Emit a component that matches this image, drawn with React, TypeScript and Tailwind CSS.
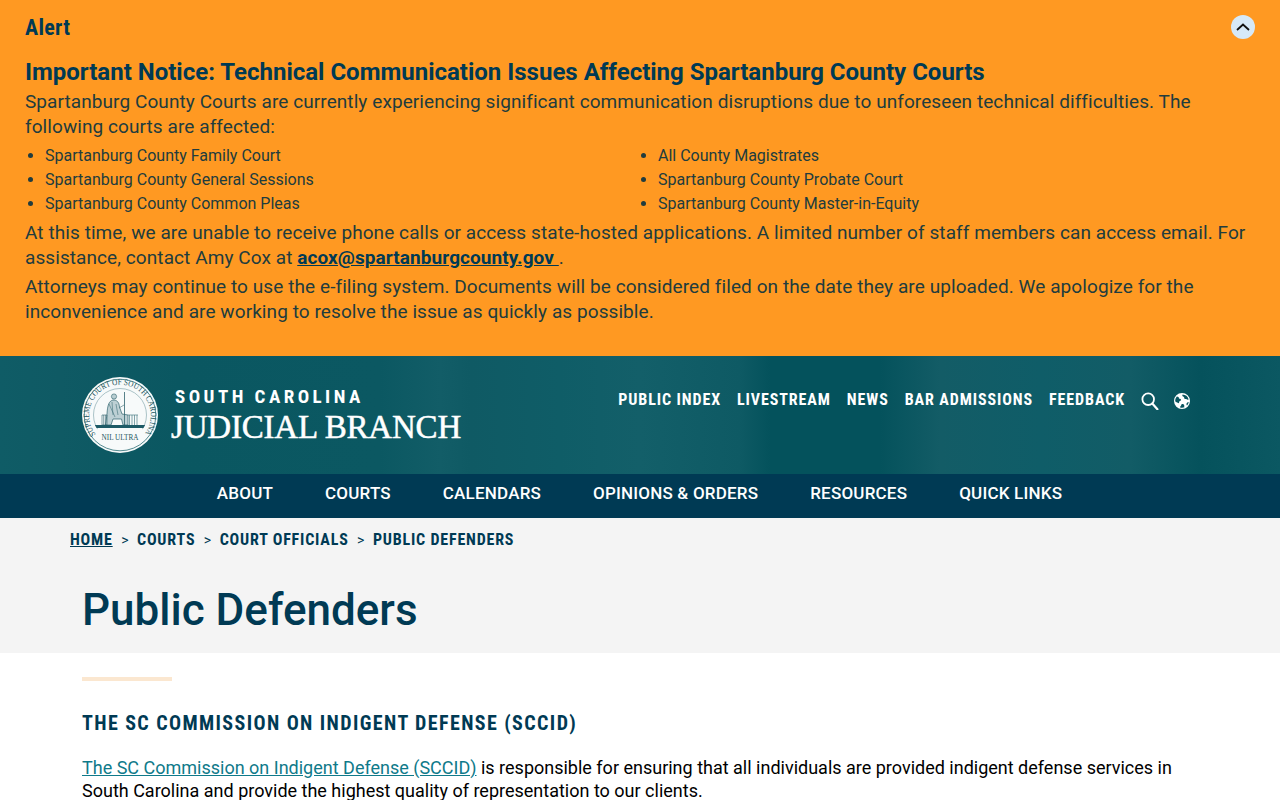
import React from "react";

function Seal() {
  return (
    <svg viewBox="0 0 76 76" className="w-[76px] h-[76px] shrink-0">
      <circle cx="38" cy="38" r="38" fill="#f7fafa" />
      <circle cx="38" cy="38" r="35.800" fill="none" stroke="#0f5a63" strokeWidth="0.7" />
      <defs>
        <path id="sealArc" d="M 13.800 57.500 A 30.800 30.800 0 1 1 62.500 57" />
        <clipPath id="sealInner"><circle cx="38" cy="38" r="27" /></clipPath>
      </defs>
      <text fontFamily="'Liberation Serif', serif" fontSize="8.500" fill="#1d5560">
        <textPath href="#sealArc" textLength="136" lengthAdjust="spacingAndGlyphs">SUPREME COURT OF SOUTH CAROLINA</textPath>
      </text>
      <circle cx="38" cy="38" r="26.500" fill="none" stroke="#5d8a92" strokeWidth="0.5" />
      <g clipPath="url(#sealInner)">
        <circle cx="32" cy="19.500" r="2.600" fill="#b9ced2" stroke="#2f636d" strokeWidth="0.6" />
        <path d="M25 37 C25.500 28 27 24 31 23 C35 23 37 25 37.500 30 L40 37 L46 38 V48 H41 L39.500 42 H31 L29 48 H23.500 Z" fill="#bdd0d4" stroke="#2f636d" strokeWidth="0.7" />
        <path d="M27 27 L33 40 M30 25 L31 38 M34 27 L36 38 M37 31 L42 28" fill="none" stroke="#3f7079" strokeWidth="0.6" />
        <path d="M42.500 15 V48" stroke="#2f636d" strokeWidth="0.8" />
        <path d="M46 38 H56 M47.500 38 V48 M50 38 V48 M52.500 38 V48 M55 38 V48" fill="none" stroke="#4e7f88" strokeWidth="0.7" />
        <path d="M20 38 h5 v10 h-5 z M21.700 38 v10 M23.400 38 v10" fill="none" stroke="#2f636d" strokeWidth="0.6" />
        <path d="M11 48 H65 V51 H11 Z" fill="#1d5a66" />
      </g>
      <path d="M15 52 H61 C59 58 54 62.500 49 65 H27 C22 62.500 17 58 15 52 Z" fill="#f7fafa" />
      <text x="38" y="62.500" textAnchor="middle" fontFamily="'Liberation Serif', serif" fontSize="7.200" fill="#1d5560">NIL ULTRA</text>
    </svg>
  );
}

function MagnifyIcon() {
  return (
    <svg viewBox="0 0 18 18" className="w-[18px] h-[18px] mt-[1px] mr-[-1px]" fill="none" stroke="#fff">
      <circle cx="7.200" cy="7.200" r="5.800" strokeWidth="1.800" />
      <path d="M11.300 11.600 L16.400 17.200" strokeWidth="2.200" strokeLinecap="round" />
    </svg>
  );
}

function Globe() {
  return (
    <svg viewBox="0 0 16 16" className="w-4 h-4 mt-[1px]" fill="#fff">
      <path fillRule="evenodd" d="M8 0a8 8 0 1 0 0 16A8 8 0 0 0 8 0ZM2.900 3.600c.7.2 1.200.1 1.600.5.4.5.1 1 .6 1.400.6.5 1.400.3 1.800.9.3.5 0 1-.4 1.400-.4.3-.9.3-1.200.7-.4.5 0 1.400-.5 1.700C3.600 9.600 1.200 9 1.200 8c0-1.700.6-3.200 1.700-4.400ZM8 14.800c-.7 0-1.300-.1-1.900-.3-.1-.8.3-1.300.8-1.800.6-.6.4-1.200 1-1.600.8-.4 1.900.1 2.300 1 .2.600-.1 1.100 0 1.700.1.200.2.300.3.500-.8.300-1.600.5-2.500.5ZM13 12.600c-.5-.4-.6-1.100-.5-1.800.1-.7.700-1.100 1.300-1.500.3-.2.6-.3.900-.3-.2 1.400-.8 2.600-1.700 3.600ZM14.500 6.500c-.7.400-1.300.2-1.900-.2-.7-.4-1.300-.1-2-.5-.6-.5-.2-1.300-.7-1.900-.4-.5-1.200-.4-1.500-1-.2-.5 0-1 .2-1.500 2.900.1 5.300 2 5.900 4.600Z" />
    </svg>
  );
}

function ChevronBtn() {
  return (
    <button className="mt-[1px] w-6 h-6 rounded-full bg-[#d6e9f8] flex items-center justify-center">
      <svg viewBox="0 0 14 8" className="w-[14px] h-2" fill="none" stroke="#111" strokeWidth="1.800"><path d="M1 7 L7 1.500 L13 7" /></svg>
    </button>
  );
}

function Sep() {
  return <span className="mx-[8.5px] font-normal text-[14px] font-stretch-normal tracking-normal">&gt;</span>;
}

export default function App() {
  const left = ["Spartanburg County Family Court", "Spartanburg County General Sessions", "Spartanburg County Common Pleas"];
  const right = ["All County Magistrates", "Spartanburg County Probate Court", "Spartanburg County Master-in-Equity"];
  const top = ["PUBLIC INDEX", "LIVESTREAM", "NEWS", "BAR ADMISSIONS", "FEEDBACK"];
  const nav = ["ABOUT", "COURTS", "CALENDARS", "OPINIONS & ORDERS", "RESOURCES", "QUICK LINKS"];
  const body = "text-[19px] leading-[25px] tracking-[0.08px] text-[#213c3e]";
  return (
    <div className="font-['Roboto','Liberation_Sans',sans-serif] h-[800px] overflow-hidden bg-white text-[#003a54]">
      <section className="bg-[#ff9922] h-[356px] px-[25px] pt-[14px]">
        <div className="flex justify-between items-start">
          <div className="text-[22px] font-bold leading-[27px] font-stretch-condensed tracking-[0.3px]">Alert</div>
          <ChevronBtn />
        </div>
        <h3 className="mt-[15px] text-[24px] font-bold leading-[32px] whitespace-nowrap">Important Notice: Technical Communication Issues Affecting Spartanburg County Courts</h3>
        <p className={`mt-[1px] ${body}`}>Spartanburg County Courts are currently experiencing significant communication disruptions due to unforeseen technical difficulties. The following courts are affected:</p>
        <div className="mt-[5px] grid grid-cols-[613px_1fr] text-[16px] leading-[24px] text-[#213c3e]">
          <ul className="list-disc pl-5">{left.map((t) => <li key={t}>{t}</li>)}</ul>
          <ul className="list-disc pl-5">{right.map((t) => <li key={t}>{t}</li>)}</ul>
        </div>
        <p className={`mt-[4px] ${body}`}>At this time, we are unable to receive phone calls or access state-hosted applications. A limited number of staff members can access email. For assistance, contact Amy Cox at <a className="font-bold underline text-[#003a54]">acox@spartanburgcounty.gov </a>.</p>
        <p className={`mt-[4px] ${body}`}>Attorneys may continue to use the e-filing system. Documents will be considered filed on the date they are uploaded. We apologize for the inconvenience and are working to resolve the issue as quickly as possible.</p>
      </section>

      <header className="h-[118px] pl-[82px] pr-[90px] flex items-center justify-between bg-[#0f5a63] bg-[linear-gradient(90deg,#0f5c66_0px,#0f5a64_60px,#0a5761_180px,#0b5862_380px,#125d67_440px,#0f5a64_470px,#0f5d67_560px,#135f69_640px,#0e5a64_740px,#04525c_770px,#04525c_880px,#135c66_940px,#0f5d68_1040px,#125c66_1130px,#05525c_1200px,#0b5862_1280px)]">
        <div className="flex items-center">
          <Seal />
          <div className="ml-[13px] text-white">
            <div className="ml-[4px] mt-[1px] text-[19px] font-bold font-stretch-condensed leading-[22px] tracking-[3.45px]">SOUTH CAROLINA</div>
            <div className="mt-[1px] font-['Liberation_Serif',serif] text-[33px] leading-[36px] font-normal tracking-[-0.2px] [-webkit-text-stroke:0.5px_#fff] whitespace-nowrap">JUDICIAL BRANCH</div>
          </div>
        </div>
        <nav className="flex items-center gap-4 text-white text-[16px] font-bold font-stretch-condensed tracking-[0.9px] mt-[-30px]">
          {top.map((t) => <a key={t} className="whitespace-nowrap">{t}</a>)}
          <MagnifyIcon />
          <Globe />
        </nav>
      </header>

      <nav className="h-[44px] bg-[#003a54] flex items-start pt-[8px] pr-[1px] justify-center gap-[52px] text-white text-[17px] font-medium leading-[22px] tracking-[0.2px]">
        {nav.map((t) => <a key={t} className="whitespace-nowrap">{t}</a>)}
      </nav>

      <section className="bg-[#f4f4f4] h-[135px] pl-[70px]">
        <div className="pt-[12px] flex items-center text-[16px] font-bold font-stretch-condensed leading-[20px] tracking-[0.8px]">
          <a className="underline">HOME</a>
          <Sep />
          <a>COURTS</a>
          <Sep />
          <a>COURT OFFICIALS</a>
          <Sep />
          <a>PUBLIC DEFENDERS</a>
        </div>
        <h1 className="ml-[12px] mt-[34px] text-[44px] font-medium leading-[52px]">Public Defenders</h1>
      </section>

      <main className="pl-[82px] pt-[24px] pr-[100px]">
        <div className="w-[90px] h-1 bg-[#fbe7d0]" />
        <h2 className="mt-[28px] text-[20px] font-bold font-stretch-condensed leading-[28px] tracking-[1.4px]">THE SC COMMISSION ON INDIGENT DEFENSE (SCCID)</h2>
        <p className="mt-[19px] text-[18px] leading-[23px] text-black">
          <a className="underline text-[#0f7a8a]">The SC Commission on Indigent Defense (SCCID)</a> is responsible for ensuring that all individuals are provided indigent defense services in South Carolina and provide the highest quality of representation to our clients.
        </p>
      </main>
    </div>
  );
}
